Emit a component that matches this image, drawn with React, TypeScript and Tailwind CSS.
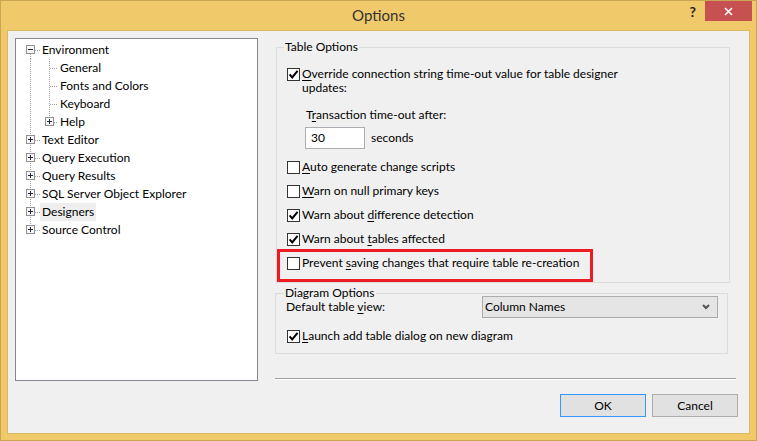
import type { ReactNode } from 'react';

type TreeRow = {
  label: string;
  level: 0 | 1;
  box?: 'plus' | 'minus';
  // where the dotted lines run in this row
  rootLine: 'down' | 'full' | 'up';
  childLine?: 'full' | 'up';
  selected?: boolean;
};

const TREE: TreeRow[] = [
  { label: 'Environment', level: 0, box: 'minus', rootLine: 'down' },
  { label: 'General', level: 1, rootLine: 'full', childLine: 'full' },
  { label: 'Fonts and Colors', level: 1, rootLine: 'full', childLine: 'full' },
  { label: 'Keyboard', level: 1, rootLine: 'full', childLine: 'full' },
  { label: 'Help', level: 1, box: 'plus', rootLine: 'full', childLine: 'up' },
  { label: 'Text Editor', level: 0, box: 'plus', rootLine: 'full' },
  { label: 'Query Execution', level: 0, box: 'plus', rootLine: 'full' },
  { label: 'Query Results', level: 0, box: 'plus', rootLine: 'full' },
  { label: 'SQL Server Object Explorer', level: 0, box: 'plus', rootLine: 'full' },
  { label: 'Designers', level: 0, box: 'plus', rootLine: 'full', selected: true },
  { label: 'Source Control', level: 0, box: 'plus', rootLine: 'up' },
];

function Expander({ x, kind }: { x: number; kind: 'plus' | 'minus' }) {
  return (
    <g>
      <rect x={x + 0.5} y={4.5} width={8} height={8} fill="#f7f7f7" stroke="#919191" />
      <line x1={x + 2} y1={8.5} x2={x + 7} y2={8.5} stroke="#1e2a3a" />
      {kind === 'plus' && <line x1={x + 4.5} y1={6} x2={x + 4.5} y2={11} stroke="#1e2a3a" />}
    </g>
  );
}

function TreeGutter({ row }: { row: TreeRow }) {
  const w = row.level === 0 ? 24 : 42;
  const rootY1 = row.rootLine === 'down' ? 9 : 0;
  const rootY2 = row.rootLine === 'up' ? 9 : 18;
  return (
    <svg width={w} height={18} className="shrink-0" shapeRendering="crispEdges">
      <g stroke="#a0a0a0" strokeDasharray="1 1">
        <line x1={14.5} y1={rootY1} x2={14.5} y2={rootY2} />
        {row.level === 0 && <line x1={19} y1={9.5} x2={24} y2={9.5} />}
        {row.level === 1 && (
          <>
            <line x1={33.5} y1={0} x2={33.5} y2={row.childLine === 'up' ? 9 : 18} />
            <line x1={34} y1={9.5} x2={42} y2={9.5} />
          </>
        )}
      </g>
      {row.box && <Expander x={row.level === 0 ? 10 : 29} kind={row.box} />}
    </svg>
  );
}

function Check({ on }: { on?: boolean }) {
  return (
    <span className="flex h-[13px] w-[13px] shrink-0 items-center justify-center border border-[#333333] bg-white">
      {on && (
        <svg width="11" height="11" viewBox="0 0 11 11">
          <path d="M1.6 5.4 L4.2 8.4 L9.6 1.8" fill="none" stroke="#000" strokeWidth="2" />
        </svg>
      )}
    </span>
  );
}

// text with one underlined access key
function Acc({ pre, k, post }: { pre?: string; k: string; post: string }) {
  return (
    <span>
      {pre}
      <u className="underline-offset-[2px]">{k}</u>
      {post}
    </span>
  );
}

function CheckRow({ on, children, mark }: { on?: boolean; children: ReactNode; mark?: boolean }) {
  return (
    <div className="relative flex h-[24px] items-center gap-[2px] pl-[10px]">
      <Check on={on} />
      {children}
      {mark && <span className="absolute left-0 -top-[2px] h-[33px] w-[316px] border-[3px] border-[#ED1C24]" />}
    </div>
  );
}

export default function App() {
  return (
    <div className="flex h-[441px] w-[757px] flex-col border border-[#C9A651] bg-[#F0C96B] font-['Lato',sans-serif] text-[12px] text-black">
      {/* title bar */}
      <div className="grid h-[29px] grid-cols-[1fr_auto_1fr]">
        <div />
        <div className="pt-[4px] text-[15px] leading-[20px] text-[#333333]">Options</div>
        <div className="flex items-start justify-end">
          <span className="mr-[9px] mt-[2px] text-[14px] font-bold leading-[18px] text-[#222]">?</span>
          <button className="mr-[4px] flex h-[20px] w-[47px] items-center justify-center bg-[#C75050]">
            <svg width="9" height="9" viewBox="0 0 9 9">
              <path d="M1 1 L8 8 M8 1 L1 8" stroke="#fff" strokeWidth="1.6" />
            </svg>
          </button>
        </div>
      </div>

      {/* client area */}
      <div className="mx-[6px] flex h-[404px] gap-[17px] border border-[#DDB862] bg-[#F0F0F0] pl-[7px] pt-[7px]">
        {/* tree */}
        <div className="h-[343px] w-[243px] shrink-0 border border-[#828790] bg-white pt-[2px]">
          {TREE.map((row) => (
            <div key={row.label} className="flex h-[18px] items-center">
              <TreeGutter row={row} />
              <span className={`px-[2px] leading-[18px] ${row.selected ? 'bg-[#EEEEEE]' : ''}`}>{row.label}</span>
            </div>
          ))}
        </div>

        {/* settings */}
        <div className="mt-[1px] flex w-[463px] flex-col">
          <fieldset className="ml-[1px] w-[454px] border border-[#DCDCDC] pb-[7px]">
            <legend className="ml-[7px] px-[1px] leading-[16px]">Table Options</legend>
            <div className="mt-[12px] flex items-start gap-[2px] pl-[10px]">
              <span className="mt-[1px]">
                <Check on />
              </span>
              <span className="leading-[14px]">
                <Acc k="O" post="verride connection string time-out value for table designer" />
                <br />
                updates:
              </span>
            </div>
            <div className="mt-[13px] pl-[29px] leading-[14px]">
              <Acc pre="T" k="r" post="ansaction time-out after:" />
            </div>
            <div className="mt-[5px] flex items-center gap-[6px] pl-[28px]">
              <div className="flex h-[22px] w-[60px] items-center border border-[#ABADB3] bg-white pl-[5px]">30</div>
              <span>seconds</span>
            </div>
            <div className="mt-[6px]">
              <CheckRow>
                <Acc k="A" post="uto generate change scripts" />
              </CheckRow>
              <CheckRow>
                <Acc k="W" post="arn on null primary keys" />
              </CheckRow>
              <CheckRow on>
                <Acc pre="Warn about " k="d" post="ifference detection" />
              </CheckRow>
              <CheckRow on>
                <Acc pre="Warn about " k="t" post="ables affected" />
              </CheckRow>
              <CheckRow mark>
                <Acc pre="Prevent " k="s" post="aving changes that require table re-creation" />
              </CheckRow>
            </div>
          </fieldset>

          <fieldset className="mt-[2px] w-[453px] border border-[#DCDCDC] pb-[5px]">
            <legend className="ml-[8px] px-[1px] leading-[16px]">Diagram Options</legend>
            <div className="-mt-[5px] flex h-[22px] items-center pl-[10px] pr-[9px]">
              <span className="flex-1">
                <Acc pre="Default table " k="v" post="iew:" />
              </span>
              <div className="flex h-[22px] w-[236px] items-center justify-between border border-[#ACACAC] bg-[#E5E5E5] pl-[2px] pr-[7px]">
                <span>Column Names</span>
                <svg width="8" height="6" viewBox="0 0 8 6">
                  <path d="M1 1 L4 4 L7 1" fill="none" stroke="#555" strokeWidth="2" />
                </svg>
              </div>
            </div>
            <div className="mt-[6px] flex h-[24px] items-center gap-[2px] pl-[11px]">
              <Check on />
              <Acc k="L" post="aunch add table dialog on new diagram" />
            </div>
          </fieldset>

          <div className="mt-[24px] w-[461px] border-t border-b border-t-[#A0A0A0] border-b-white" />

          <div className="mt-[14px] flex justify-end gap-[6px]">
            <button className="h-[23px] w-[86px] border border-[#3399FF] bg-[#E1E1E1]">OK</button>
            <button className="h-[23px] w-[86px] border border-[#ADADAD] bg-[#E1E1E1]">Cancel</button>
          </div>
        </div>
      </div>
    </div>
  );
}
